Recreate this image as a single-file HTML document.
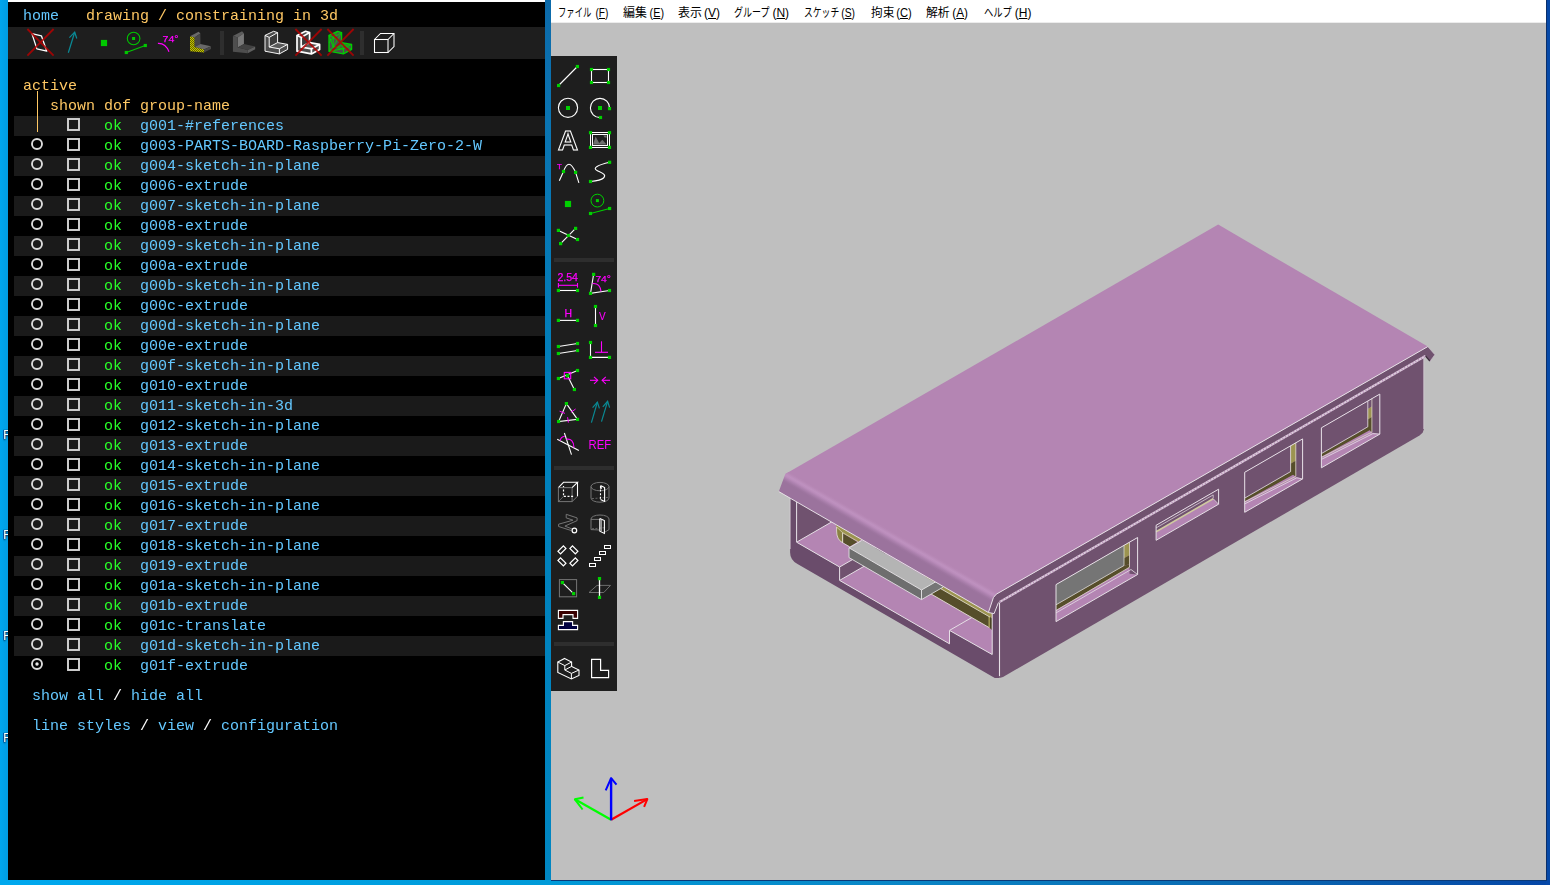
<!DOCTYPE html>
<html lang="ja">
<head>
<meta charset="utf-8">
<title>SolveSpace</title>
<style>
html,body{margin:0;padding:0;}
body{width:1550px;height:885px;overflow:hidden;background:#0563b8;}
#desk{position:absolute;left:0;top:0;width:1550px;height:885px;overflow:hidden;background:#00a3ea;}
#s_mid{position:absolute;left:545px;top:0;width:6px;height:885px;background:linear-gradient(180deg,#0c6aaa 0px,#0a74b2 120px,#0080bc 400px,#0086c2 885px);}
#s_bot{position:absolute;left:0;top:880px;width:1550px;height:5px;background:linear-gradient(90deg,#00a8ee 0px,#009ad8 550px,#0a86c6 900px,#0a68b0 1250px,#0546a6 1550px);}
#s_right{position:absolute;left:1546px;top:0;width:4px;height:885px;background:#0649a8;}
#s_left{position:absolute;left:0;top:0;width:8px;height:885px;background:linear-gradient(90deg,#00a6ee,#009ce2);}
.dk{position:absolute;left:3px;width:6px;height:14px;overflow:hidden;color:#fff;font:12px "Liberation Sans",sans-serif;line-height:14px;text-shadow:-1px 0 1px #013,0 1px 2px #013;}
#tw{position:absolute;left:8px;top:2px;width:537px;height:878px;background:#000;overflow:hidden;
  font-family:"Liberation Mono","DejaVu Sans Mono",monospace;font-size:15px;line-height:20px;color:#fff;transform:translateZ(0);will-change:transform;}
#twtop{position:absolute;left:8px;top:0;width:537px;height:2px;background:#fff;}
#tw .band{position:absolute;left:0;top:25px;width:537px;height:32px;background:#1e1e1e;}
#tw .row{position:absolute;left:6px;width:531px;height:20px;}
#tw .row.sh{background:#1a1a1a;}
#tw .t{position:absolute;white-space:pre;height:20px;line-height:20px;}
.cl{color:#64c8ff}.ct{color:#ffc864}.cs{color:#28ff28}.cd{color:#fff}
#tw .vline{position:absolute;left:29px;top:89px;width:1px;height:41px;background:#ffc864;}
#tw svg.ic{position:absolute;overflow:visible;}
#gw{position:absolute;left:551px;top:0;width:995px;height:880px;background:#bfbfbf;overflow:hidden;}
#gwr{position:absolute;left:1546px;top:0;width:1px;height:881px;background:#0a2f6a;}
#gwb{position:absolute;left:551px;top:880px;width:996px;height:1px;background:#0a3a78;}
#menu{position:absolute;left:0;top:0;width:995px;height:22px;background:#fff;border-bottom:1px solid #ececec;
  font-family:"Liberation Sans","Noto Sans CJK JP",sans-serif;font-size:12px;color:#000;}
#menu span.mi{position:absolute;top:0;height:22px;line-height:26px;white-space:nowrap;transform-origin:0 50%;}
#menu u{text-decoration:underline;text-underline-offset:1px;}
#canvas{position:absolute;left:0;top:23px;width:995px;height:857px;background:#bfbfbf;overflow:hidden;}
#canvas svg{position:absolute;left:0;top:0;}
#tb{position:absolute;left:0;top:56px;width:66px;height:635px;background:#1e1e1e;transform:translateZ(0);will-change:transform;}
#tb .sep{position:absolute;left:3px;width:60px;height:4px;background:#2e2e2e;}
#tb svg{position:absolute;left:0;top:0;overflow:visible;}

</style>
</head>
<body>
<div id="desk">
<div id="s_left"></div><div id="s_mid"></div><div id="s_bot"></div><div id="s_right"></div>
<div id="twtop"></div>
<div class="dk" style="top:428px">F</div>
<div class="dk" style="top:528px">F</div>
<div class="dk" style="top:629px">F</div>
<div class="dk" style="top:731px">F</div>
<div id="tw">
<div class="band"></div>
<span class="t cl" style="left:15px;top:5px">home</span>
<span class="t ct" style="left:78px;top:5px">drawing / constraining in 3d</span>
<!--ICONS--><svg class="ic" style="left:0;top:0" width="537" height="60" viewBox="8 2 537 60">
<defs><pattern id="dith" width="2" height="2" patternUnits="userSpaceOnUse"><rect width="2" height="2" fill="#646400"/><rect width="1" height="1" fill="#c4c400"/><rect x="1" y="1" width="1" height="1" fill="#c4c400"/></pattern></defs>
<rect x="220" y="31" width="4" height="24" fill="#2e2e2e"/><rect x="360" y="31" width="4" height="24" fill="#2e2e2e"/>
<g transform="translate(28,31)"><polygon points="3.9,2.6 13.4,4.8 18.8,20.2 8.9,17.9" fill="none" stroke="#ffffff" stroke-width="1.3" stroke-linejoin="round"/><g opacity="0.85"><polyline points="-0.6,-2.0 25.6,24.7" fill="none" stroke="#b40000" stroke-width="1.8" /><polyline points="25.6,-2.0 -0.6,24.7" fill="none" stroke="#b40000" stroke-width="1.8" /></g></g>
<g transform="translate(60,31)"><polyline points="8.3,21.7 14.7,1.2" fill="none" stroke="#0a8a96" stroke-width="1.2" /><polyline points="9.4,6.6 14.7,1.2 16.8,7.5" fill="none" stroke="#0a8a96" stroke-width="1.2" /></g>
<g transform="translate(92,31)"><rect x="8.90" y="8.90" width="6.2" height="6.2" fill="#00c800"/></g>
<g transform="translate(124,31)"><circle cx="9.6" cy="7.5" r="6.3" fill="none" stroke="#00c800" stroke-width="1.1"/><rect x="8.10" y="6.00" width="3" height="3" fill="#00c800"/><polyline points="2.3,21.5 21.3,14.5" fill="none" stroke="#00c800" stroke-width="1.2" /><rect x="0.70" y="19.90" width="3.2" height="3.2" fill="#00c800"/><rect x="19.70" y="12.90" width="3.2" height="3.2" fill="#00c800"/></g>
<g transform="translate(156,31)"><text x="6.6" y="10.7" font-family="Liberation Sans,sans-serif"  font-size="9.6" fill="#ff00ff" stroke="#ff00ff" stroke-width="0.25" textLength="16" lengthAdjust="spacingAndGlyphs">74°</text><path d="M1.9,12.4 Q9.6,12 13,20.8" fill="none" stroke="#ff00ff" stroke-width="1.2"/></g>
<g transform="translate(188,31)"><polygon points="2.0,5.3 10.6,0.7 12.4,2.6 6.5,6.6" fill="#6a6a6a"/><polygon points="6.5,6.6 12.4,2.6 12.4,12.9 6.5,16.1" fill="#464646"/><polygon points="6.5,16.1 12.4,12.9 23.0,15.2 16.0,18.4" fill="#686868"/><polygon points="16.0,18.4 23.0,15.2 23.0,17.9 16.0,21.5" fill="#464646"/><polygon points="2.0,5.3 6.5,6.6 6.5,16.1 16.0,18.4 16.0,21.5 2.0,20.2" fill="url(#dith)"/></g>
<g transform="translate(232,31)"><g transform="translate(-1.2,-0.6) scale(1.06,1.06)"><polygon points="2.0,5.3 10.6,0.7 12.4,2.6 6.5,6.6" fill="#5c5c5c"/><polygon points="6.5,6.6 12.4,2.6 12.4,12.9 6.5,16.1" fill="#787878"/><polygon points="6.5,16.1 12.4,12.9 23.0,15.2 16.0,18.4" fill="#424242"/><polygon points="16.0,18.4 23.0,15.2 23.0,17.9 16.0,21.5" fill="#5e5e5e"/><polygon points="2.0,5.3 6.5,6.6 6.5,16.1 16.0,18.4 16.0,21.5 2.0,20.2" fill="#4e4e4e"/></g></g>
<g transform="translate(264,31)"><polygon points="1.0,4.4 9.6,0.3 13.6,1.6 13.6,11.6 23.6,13.4 23.6,18.4 15.4,22.9 1.0,20.2" fill="#4c4c4c"/><polygon points="5.2,6.4 13.6,1.6 13.6,11.6 5.2,16.0" fill="#3c3c3c"/><polygon points="5.2,16.0 13.6,11.6 23.6,13.4 15.4,17.8" fill="#5a5a5a"/><polygon points="1.0,4.4 9.6,0.3 13.6,1.6 13.6,11.6 23.6,13.4 23.6,18.4 15.4,22.9 1.0,20.2" fill="none" stroke="#ffffff" stroke-width="0.95" stroke-linejoin="round"/><polyline points="1.0,4.4 5.2,6.4 13.6,1.6" fill="none" stroke="#ffffff" stroke-width="0.95" /><polyline points="5.2,6.4 5.2,16.0 15.4,17.8 23.6,13.4" fill="none" stroke="#ffffff" stroke-width="0.95" /><polyline points="15.4,17.8 15.4,22.9" fill="none" stroke="#ffffff" stroke-width="0.95" /><polyline points="5.2,16.0 13.6,11.6" fill="none" stroke="#ffffff" stroke-width="0.95" /></g>
<g transform="translate(296,31)"><polygon points="1.0,4.4 9.6,0.3 13.6,1.6 13.6,11.6 23.6,13.4 23.6,18.4 15.4,22.9 1.0,20.2" fill="#4c4c4c"/><polygon points="5.2,6.4 13.6,1.6 13.6,11.6 5.2,16.0" fill="#3c3c3c"/><polygon points="5.2,16.0 13.6,11.6 23.6,13.4 15.4,17.8" fill="#5a5a5a"/><polygon points="1.0,4.4 9.6,0.3 13.6,1.6 13.6,11.6 23.6,13.4 23.6,18.4 15.4,22.9 1.0,20.2" fill="none" stroke="#ffffff" stroke-width="1.7" stroke-linejoin="round"/><polyline points="1.0,4.4 5.2,6.4 13.6,1.6" fill="none" stroke="#ffffff" stroke-width="1.7" /><polyline points="5.2,6.4 5.2,16.0 15.4,17.8 23.6,13.4" fill="none" stroke="#ffffff" stroke-width="1.7" /><polyline points="15.4,17.8 15.4,22.9" fill="none" stroke="#ffffff" stroke-width="1.7" /><polyline points="5.2,16.0 13.6,11.6" fill="none" stroke="#ffffff" stroke-width="1.7" /><g opacity="0.85"><polyline points="-0.6,-2.0 25.6,24.7" fill="none" stroke="#b40000" stroke-width="1.8" /><polyline points="25.6,-2.0 -0.6,24.7" fill="none" stroke="#b40000" stroke-width="1.8" /></g></g>
<g transform="translate(328,31)"><polygon points="1.0,4.4 9.6,0.3 13.6,1.6 13.6,11.6 23.6,13.4 23.6,18.4 15.4,22.9 1.0,20.2" fill="#4c4c4c"/><polygon points="1.0,4.4 9.6,0.3 13.6,1.6 13.6,11.6 23.6,13.4 23.6,18.4 15.4,22.9 1.0,20.2" fill="none" stroke="#00d000" stroke-width="1.3" stroke-linejoin="round"/><polyline points="1.0,4.4 5.2,6.4 13.6,1.6" fill="none" stroke="#00d000" stroke-width="1" /><polyline points="5.2,6.4 5.2,16.0 15.4,17.8 23.6,13.4" fill="none" stroke="#00d000" stroke-width="1" /><polyline points="15.4,17.8 15.4,22.9" fill="none" stroke="#00d000" stroke-width="1" /><polyline points="1.0,4.4 5.2,16.0 1.0,20.2 15.4,17.8 15.4,22.9" fill="none" stroke="#00d000" stroke-width="1" /><polyline points="5.2,6.4 13.6,11.6 15.4,17.8" fill="none" stroke="#00d000" stroke-width="1" /><polyline points="9.6,0.3 5.2,6.4" fill="none" stroke="#00d000" stroke-width="1" /><polyline points="13.6,1.6 5.2,16.0" fill="none" stroke="#00d000" stroke-width="0.9" /><polyline points="13.6,11.6 23.6,18.4" fill="none" stroke="#00d000" stroke-width="0.9" /><polyline points="5.2,16.0 23.6,13.4" fill="none" stroke="#00d000" stroke-width="0.9" /><polyline points="1.0,12.0 5.2,6.4" fill="none" stroke="#00d000" stroke-width="0.9" /><g opacity="0.85"><polyline points="-0.6,-2.0 25.6,24.7" fill="none" stroke="#b40000" stroke-width="1.8" /><polyline points="25.6,-2.0 -0.6,24.7" fill="none" stroke="#b40000" stroke-width="1.8" /></g></g>
<g transform="translate(372,31)"><rect x="2.5" y="8.5" width="13.5" height="13" fill="none" stroke="#fff" stroke-width="1.05"/><polyline points="2.5,8.5 8.5,2.5 22.0,2.5 22.0,15.5 16.0,21.5" fill="none" stroke="#ffffff" stroke-width="1.05" /><polyline points="16.0,8.5 22.0,2.5" fill="none" stroke="#ffffff" stroke-width="1.05" /></g>
</svg><!--/ICONS-->
<span class="t ct" style="left:15px;top:75px">active</span>
<span class="t ct" style="left:42px;top:95px">shown dof group-name</span>
<div class="row sh" style="top:114px"></div>
<div class="row" style="top:134px"></div>
<div class="row sh" style="top:154px"></div>
<div class="row" style="top:174px"></div>
<div class="row sh" style="top:194px"></div>
<div class="row" style="top:214px"></div>
<div class="row sh" style="top:234px"></div>
<div class="row" style="top:254px"></div>
<div class="row sh" style="top:274px"></div>
<div class="row" style="top:294px"></div>
<div class="row sh" style="top:314px"></div>
<div class="row" style="top:334px"></div>
<div class="row sh" style="top:354px"></div>
<div class="row" style="top:374px"></div>
<div class="row sh" style="top:394px"></div>
<div class="row" style="top:414px"></div>
<div class="row sh" style="top:434px"></div>
<div class="row" style="top:454px"></div>
<div class="row sh" style="top:474px"></div>
<div class="row" style="top:494px"></div>
<div class="row sh" style="top:514px"></div>
<div class="row" style="top:534px"></div>
<div class="row sh" style="top:554px"></div>
<div class="row" style="top:574px"></div>
<div class="row sh" style="top:594px"></div>
<div class="row" style="top:614px"></div>
<div class="row sh" style="top:634px"></div>
<div class="row" style="top:654px"></div>
<span class="t cs" style="left:96px;top:115px">ok</span>
<span class="t cl" style="left:132px;top:115px">g001-#references</span>
<span class="t cs" style="left:96px;top:135px">ok</span>
<span class="t cl" style="left:132px;top:135px">g003-PARTS-BOARD-Raspberry-Pi-Zero-2-W</span>
<span class="t cs" style="left:96px;top:155px">ok</span>
<span class="t cl" style="left:132px;top:155px">g004-sketch-in-plane</span>
<span class="t cs" style="left:96px;top:175px">ok</span>
<span class="t cl" style="left:132px;top:175px">g006-extrude</span>
<span class="t cs" style="left:96px;top:195px">ok</span>
<span class="t cl" style="left:132px;top:195px">g007-sketch-in-plane</span>
<span class="t cs" style="left:96px;top:215px">ok</span>
<span class="t cl" style="left:132px;top:215px">g008-extrude</span>
<span class="t cs" style="left:96px;top:235px">ok</span>
<span class="t cl" style="left:132px;top:235px">g009-sketch-in-plane</span>
<span class="t cs" style="left:96px;top:255px">ok</span>
<span class="t cl" style="left:132px;top:255px">g00a-extrude</span>
<span class="t cs" style="left:96px;top:275px">ok</span>
<span class="t cl" style="left:132px;top:275px">g00b-sketch-in-plane</span>
<span class="t cs" style="left:96px;top:295px">ok</span>
<span class="t cl" style="left:132px;top:295px">g00c-extrude</span>
<span class="t cs" style="left:96px;top:315px">ok</span>
<span class="t cl" style="left:132px;top:315px">g00d-sketch-in-plane</span>
<span class="t cs" style="left:96px;top:335px">ok</span>
<span class="t cl" style="left:132px;top:335px">g00e-extrude</span>
<span class="t cs" style="left:96px;top:355px">ok</span>
<span class="t cl" style="left:132px;top:355px">g00f-sketch-in-plane</span>
<span class="t cs" style="left:96px;top:375px">ok</span>
<span class="t cl" style="left:132px;top:375px">g010-extrude</span>
<span class="t cs" style="left:96px;top:395px">ok</span>
<span class="t cl" style="left:132px;top:395px">g011-sketch-in-3d</span>
<span class="t cs" style="left:96px;top:415px">ok</span>
<span class="t cl" style="left:132px;top:415px">g012-sketch-in-plane</span>
<span class="t cs" style="left:96px;top:435px">ok</span>
<span class="t cl" style="left:132px;top:435px">g013-extrude</span>
<span class="t cs" style="left:96px;top:455px">ok</span>
<span class="t cl" style="left:132px;top:455px">g014-sketch-in-plane</span>
<span class="t cs" style="left:96px;top:475px">ok</span>
<span class="t cl" style="left:132px;top:475px">g015-extrude</span>
<span class="t cs" style="left:96px;top:495px">ok</span>
<span class="t cl" style="left:132px;top:495px">g016-sketch-in-plane</span>
<span class="t cs" style="left:96px;top:515px">ok</span>
<span class="t cl" style="left:132px;top:515px">g017-extrude</span>
<span class="t cs" style="left:96px;top:535px">ok</span>
<span class="t cl" style="left:132px;top:535px">g018-sketch-in-plane</span>
<span class="t cs" style="left:96px;top:555px">ok</span>
<span class="t cl" style="left:132px;top:555px">g019-extrude</span>
<span class="t cs" style="left:96px;top:575px">ok</span>
<span class="t cl" style="left:132px;top:575px">g01a-sketch-in-plane</span>
<span class="t cs" style="left:96px;top:595px">ok</span>
<span class="t cl" style="left:132px;top:595px">g01b-extrude</span>
<span class="t cs" style="left:96px;top:615px">ok</span>
<span class="t cl" style="left:132px;top:615px">g01c-translate</span>
<span class="t cs" style="left:96px;top:635px">ok</span>
<span class="t cl" style="left:132px;top:635px">g01d-sketch-in-plane</span>
<span class="t cs" style="left:96px;top:655px">ok</span>
<span class="t cl" style="left:132px;top:655px">g01f-extrude</span>
<div class="vline"></div>
<svg class="ic" style="left:0;top:0" width="537" height="878" viewBox="8 2 537 878" fill="none">
<rect x="68" y="119" width="11" height="11" stroke="#d4d4d4" stroke-width="1.9"/>
<rect x="68" y="139" width="11" height="11" stroke="#d4d4d4" stroke-width="1.9"/>
<circle cx="37" cy="144" r="5" stroke="#dcdcdc" stroke-width="1.9"/>
<rect x="68" y="159" width="11" height="11" stroke="#d4d4d4" stroke-width="1.9"/>
<circle cx="37" cy="164" r="5" stroke="#dcdcdc" stroke-width="1.9"/>
<rect x="68" y="179" width="11" height="11" stroke="#d4d4d4" stroke-width="1.9"/>
<circle cx="37" cy="184" r="5" stroke="#dcdcdc" stroke-width="1.9"/>
<rect x="68" y="199" width="11" height="11" stroke="#d4d4d4" stroke-width="1.9"/>
<circle cx="37" cy="204" r="5" stroke="#dcdcdc" stroke-width="1.9"/>
<rect x="68" y="219" width="11" height="11" stroke="#d4d4d4" stroke-width="1.9"/>
<circle cx="37" cy="224" r="5" stroke="#dcdcdc" stroke-width="1.9"/>
<rect x="68" y="239" width="11" height="11" stroke="#d4d4d4" stroke-width="1.9"/>
<circle cx="37" cy="244" r="5" stroke="#dcdcdc" stroke-width="1.9"/>
<rect x="68" y="259" width="11" height="11" stroke="#d4d4d4" stroke-width="1.9"/>
<circle cx="37" cy="264" r="5" stroke="#dcdcdc" stroke-width="1.9"/>
<rect x="68" y="279" width="11" height="11" stroke="#d4d4d4" stroke-width="1.9"/>
<circle cx="37" cy="284" r="5" stroke="#dcdcdc" stroke-width="1.9"/>
<rect x="68" y="299" width="11" height="11" stroke="#d4d4d4" stroke-width="1.9"/>
<circle cx="37" cy="304" r="5" stroke="#dcdcdc" stroke-width="1.9"/>
<rect x="68" y="319" width="11" height="11" stroke="#d4d4d4" stroke-width="1.9"/>
<circle cx="37" cy="324" r="5" stroke="#dcdcdc" stroke-width="1.9"/>
<rect x="68" y="339" width="11" height="11" stroke="#d4d4d4" stroke-width="1.9"/>
<circle cx="37" cy="344" r="5" stroke="#dcdcdc" stroke-width="1.9"/>
<rect x="68" y="359" width="11" height="11" stroke="#d4d4d4" stroke-width="1.9"/>
<circle cx="37" cy="364" r="5" stroke="#dcdcdc" stroke-width="1.9"/>
<rect x="68" y="379" width="11" height="11" stroke="#d4d4d4" stroke-width="1.9"/>
<circle cx="37" cy="384" r="5" stroke="#dcdcdc" stroke-width="1.9"/>
<rect x="68" y="399" width="11" height="11" stroke="#d4d4d4" stroke-width="1.9"/>
<circle cx="37" cy="404" r="5" stroke="#dcdcdc" stroke-width="1.9"/>
<rect x="68" y="419" width="11" height="11" stroke="#d4d4d4" stroke-width="1.9"/>
<circle cx="37" cy="424" r="5" stroke="#dcdcdc" stroke-width="1.9"/>
<rect x="68" y="439" width="11" height="11" stroke="#d4d4d4" stroke-width="1.9"/>
<circle cx="37" cy="444" r="5" stroke="#dcdcdc" stroke-width="1.9"/>
<rect x="68" y="459" width="11" height="11" stroke="#d4d4d4" stroke-width="1.9"/>
<circle cx="37" cy="464" r="5" stroke="#dcdcdc" stroke-width="1.9"/>
<rect x="68" y="479" width="11" height="11" stroke="#d4d4d4" stroke-width="1.9"/>
<circle cx="37" cy="484" r="5" stroke="#dcdcdc" stroke-width="1.9"/>
<rect x="68" y="499" width="11" height="11" stroke="#d4d4d4" stroke-width="1.9"/>
<circle cx="37" cy="504" r="5" stroke="#dcdcdc" stroke-width="1.9"/>
<rect x="68" y="519" width="11" height="11" stroke="#d4d4d4" stroke-width="1.9"/>
<circle cx="37" cy="524" r="5" stroke="#dcdcdc" stroke-width="1.9"/>
<rect x="68" y="539" width="11" height="11" stroke="#d4d4d4" stroke-width="1.9"/>
<circle cx="37" cy="544" r="5" stroke="#dcdcdc" stroke-width="1.9"/>
<rect x="68" y="559" width="11" height="11" stroke="#d4d4d4" stroke-width="1.9"/>
<circle cx="37" cy="564" r="5" stroke="#dcdcdc" stroke-width="1.9"/>
<rect x="68" y="579" width="11" height="11" stroke="#d4d4d4" stroke-width="1.9"/>
<circle cx="37" cy="584" r="5" stroke="#dcdcdc" stroke-width="1.9"/>
<rect x="68" y="599" width="11" height="11" stroke="#d4d4d4" stroke-width="1.9"/>
<circle cx="37" cy="604" r="5" stroke="#dcdcdc" stroke-width="1.9"/>
<rect x="68" y="619" width="11" height="11" stroke="#d4d4d4" stroke-width="1.9"/>
<circle cx="37" cy="624" r="5" stroke="#dcdcdc" stroke-width="1.9"/>
<rect x="68" y="639" width="11" height="11" stroke="#d4d4d4" stroke-width="1.9"/>
<circle cx="37" cy="644" r="5" stroke="#dcdcdc" stroke-width="1.9"/>
<rect x="68" y="659" width="11" height="11" stroke="#d4d4d4" stroke-width="1.9"/>
<circle cx="37" cy="664" r="5" stroke="#dcdcdc" stroke-width="1.9"/>
<circle cx="37" cy="664" r="1.7" fill="#e8e8e8"/>
</svg>
<span class="t cl" style="left:24px;top:685px">show all</span>
<span class="t cd" style="left:105px;top:685px">/</span>
<span class="t cl" style="left:123px;top:685px">hide all</span>
<span class="t cl" style="left:24px;top:715px">line styles</span>
<span class="t cd" style="left:132px;top:715px">/</span>
<span class="t cl" style="left:150px;top:715px">view</span>
<span class="t cd" style="left:195px;top:715px">/</span>
<span class="t cl" style="left:213px;top:715px">configuration</span>
</div>
<div id="gw">
<div id="menu">
<span class="mi" style="left:7.0px;transform:scaleX(0.694)">ファイル</span><span class="mi" style="right:937.6px;transform-origin:100% 50%;transform:scaleX(0.84)">(<u>F</u>)</span>
<span class="mi" style="left:72.4px;transform:scaleX(0.996)">編集</span><span class="mi" style="right:882.2px;transform-origin:100% 50%;transform:scaleX(0.9)">(<u>E</u>)</span>
<span class="mi" style="left:127.2px;transform:scaleX(0.996)">表示</span><span class="mi" style="right:825.9px;transform-origin:100% 50%;transform:scaleX(1)">(<u>V</u>)</span>
<span class="mi" style="left:182.9px;transform:scaleX(0.750)">グループ</span><span class="mi" style="right:756.9px;transform-origin:100% 50%;transform:scaleX(1)">(<u>N</u>)</span>
<span class="mi" style="left:253.0px;transform:scaleX(0.733)">スケッチ</span><span class="mi" style="right:690.8px;transform-origin:100% 50%;transform:scaleX(0.86)">(<u>S</u>)</span>
<span class="mi" style="left:319.6px;transform:scaleX(0.975)">拘束</span><span class="mi" style="right:634.3px;transform-origin:100% 50%;transform:scaleX(0.93)">(<u>C</u>)</span>
<span class="mi" style="left:375.0px;transform:scaleX(0.988)">解析</span><span class="mi" style="right:577.9px;transform-origin:100% 50%;transform:scaleX(0.98)">(<u>A</u>)</span>
<span class="mi" style="left:432.9px;transform:scaleX(0.775)">ヘルプ</span><span class="mi" style="right:514.6px;transform-origin:100% 50%;transform:scaleX(1)">(<u>H</u>)</span>
</div>
<div id="canvas">
<svg width="995" height="857" viewBox="551 23 995 857">
<defs>
<linearGradient id="lipg" gradientUnits="userSpaceOnUse" x1="787.30" y1="470.64" x2="775.80" y2="490.55">
<stop offset="0.000" stop-color="#b485b3"/>
<stop offset="0.061" stop-color="#b687b5"/>
<stop offset="0.130" stop-color="#bb8dbb"/>
<stop offset="0.187" stop-color="#be91bf"/>
<stop offset="0.252" stop-color="#ba8cbb"/>
<stop offset="0.339" stop-color="#ac81ae"/>
<stop offset="0.435" stop-color="#9f76a1"/>
<stop offset="0.500" stop-color="#9b739d"/>
<stop offset="1.000" stop-color="#9b739d"/>
</linearGradient>
<clipPath id="opclip"><polygon points="796.6,470.0 796.6,542.2 839.6,567.0 839.6,580.4 949.5,643.8 949.5,630.4 992.2,654.5 992.2,590.0 900.0,520.0"/></clipPath>
</defs>
<polygon points="999.5,601.8 1423.8,356.8 1423.8,429.5 1422.6,432.8 1419.5,435.6 1003.0,677.0 999.5,678.0" fill="#70526f" />
<g>
<polygon points="1056.0,584.6 1137.6,537.5 1137.6,574.5 1056.0,621.6" fill="#b485b3" />
<polygon points="1129.5,542.2 1137.6,537.5 1137.6,574.5 1129.5,573.7" fill="#70526f" />
<polygon points="1056.0,584.6 1124.0,545.3 1124.0,565.8 1056.0,605.1" fill="#757575" />
<polygon points="1124.0,545.3 1129.5,542.2 1129.5,555.2 1124.0,558.3" fill="#9c9450" />
<polygon points="1124.0,558.3 1129.5,555.2 1129.5,564.2 1124.0,565.8" fill="#564e2a" />
<polygon points="1056.0,605.1 1124.0,565.8 1129.5,564.2 1129.5,567.2 1056.0,610.1" fill="#564e2a" />
<polyline points="1056.0,604.8 1124.0,565.5 1124.0,545.3" fill="none" stroke="#d8d8d0" stroke-width="0.8" stroke-linejoin="round" />
<polyline points="1129.5,542.2 1129.5,567.2 1056.0,610.6" fill="none" stroke="#dcd6c8" stroke-width="0.8" stroke-linejoin="round" />
<polyline points="1056.0,612.9 1131.0,569.5 1137.6,574.5" fill="none" stroke="#e6dfe6" stroke-width="0.8" stroke-linejoin="round" />
<polygon points="1056.0,584.6 1137.6,537.5 1137.6,574.5 1056.0,621.6" fill="none" stroke="#e6dfe6" stroke-width="1"/>
</g>
<g>
<polygon points="1156.1,525.3 1218.6,489.2 1218.6,504.2 1156.1,540.3" fill="#b485b3" />
<polygon points="1156.1,525.3 1218.6,489.2 1218.6,504.2 1213.2,498.8 1156.1,531.5" fill="#70526f" />
<polyline points="1156.1,527.9 1213.2,494.9 1213.2,498.3" fill="none" stroke="#e6dfe6" stroke-width="0.7" stroke-linejoin="round" />
<polyline points="1156.1,531.7 1213.2,498.7" fill="none" stroke="#cfc9a0" stroke-width="1.6" stroke-linejoin="round" />
<polyline points="1213.2,498.7 1218.6,504.2" fill="none" stroke="#e6dfe6" stroke-width="0.7" stroke-linejoin="round" />
<polygon points="1156.1,525.3 1218.6,489.2 1218.6,504.2 1156.1,540.3" fill="none" stroke="#e6dfe6" stroke-width="1"/>
</g>
<g>
<polygon points="1244.7,472.3 1302.6,438.9 1302.6,478.9 1244.7,512.3" fill="#b485b3" />
<polygon points="1295.8,442.8 1302.6,438.9 1302.6,478.9 1295.8,476.8" fill="#70526f" />
<polygon points="1244.7,472.3 1290.6,445.8 1290.6,472.3 1244.7,498.8" fill="#70526f" />
<polygon points="1290.6,445.8 1295.8,442.8 1295.8,442.8 1290.6,445.8" fill="#70526f" />
<polygon points="1290.6,445.8 1295.8,442.8 1295.8,460.8 1290.6,463.8" fill="#9c9450" />
<polygon points="1290.6,463.8 1295.8,460.8 1295.8,476.8 1290.6,472.8" fill="#564e2a" />
<polygon points="1244.7,498.3 1290.6,471.8 1295.8,475.8 1295.8,473.3 1244.7,501.3" fill="#564e2a" />
<polyline points="1244.7,498.1 1290.6,471.6 1290.6,445.8" fill="none" stroke="#e6dfe6" stroke-width="0.8" stroke-linejoin="round" />
<polyline points="1295.8,442.8 1295.8,476.3 1244.7,501.9" fill="none" stroke="#dcd6c8" stroke-width="0.8" stroke-linejoin="round" />
<polyline points="1244.7,503.9 1296.8,477.8 1302.6,478.9" fill="none" stroke="#e6dfe6" stroke-width="0.8" stroke-linejoin="round" />
<polygon points="1244.7,472.3 1302.6,438.9 1302.6,478.9 1244.7,512.3" fill="none" stroke="#e6dfe6" stroke-width="1"/>
</g>
<g>
<polygon points="1321.4,427.8 1379.8,394.1 1379.8,434.1 1321.4,467.8" fill="#b485b3" />
<polygon points="1371.9,398.6 1379.8,394.1 1379.8,434.1 1371.9,432.6" fill="#70526f" />
<polygon points="1321.4,427.8 1367.8,401.0 1367.8,427.5 1321.4,454.3" fill="#70526f" />
<polygon points="1367.8,401.0 1371.9,398.6 1371.9,406.6 1367.8,409.0" fill="#70526f" />
<polygon points="1367.8,409.0 1371.9,406.6 1371.9,417.1 1367.8,419.5" fill="#9c9450" />
<polygon points="1367.8,419.5 1371.9,417.1 1371.9,432.6 1367.8,428.0" fill="#564e2a" />
<polygon points="1321.4,453.8 1367.8,427.0 1371.9,431.6 1371.9,429.1 1321.4,456.8" fill="#564e2a" />
<polyline points="1321.4,453.6 1367.8,426.8 1367.8,401.0" fill="none" stroke="#e6dfe6" stroke-width="0.8" stroke-linejoin="round" />
<polyline points="1371.9,398.6 1371.9,432.1 1321.4,457.4" fill="none" stroke="#dcd6c8" stroke-width="0.8" stroke-linejoin="round" />
<polyline points="1321.4,459.4 1372.9,433.6 1379.8,434.1" fill="none" stroke="#e6dfe6" stroke-width="0.8" stroke-linejoin="round" />
<polygon points="1321.4,427.8 1379.8,394.1 1379.8,434.1 1321.4,467.8" fill="none" stroke="#e6dfe6" stroke-width="1"/>
</g>
<polyline points="1423.8,357.5 1423.8,429.0" fill="none" stroke="#d8cfd8" stroke-width="0.8" stroke-linejoin="round" />
<g clip-path="url(#opclip)">
<polygon points="790.0,460.0 1000.0,560.0 1000.0,680.0 790.0,580.0" fill="#b485b3" />
<polygon points="796.6,470.0 796.6,542.2 880.0,494.0 880.0,470.0" fill="#70526f" />
<polyline points="796.6,542.2 880.0,494.0" fill="none" stroke="#e6dfe6" stroke-width="1" stroke-linejoin="round" />
<polygon points="839.6,567.0 839.6,580.4 899.6,545.8 899.6,532.4" fill="#70526f" />
<polyline points="839.6,567.0 899.6,532.4" fill="none" stroke="#e6dfe6" stroke-width="1" stroke-linejoin="round" />
<polyline points="839.6,580.4 899.6,545.8" fill="none" stroke="#e6dfe6" stroke-width="1" stroke-linejoin="round" />
<polyline points="949.5,630.4 989.5,607.3" fill="none" stroke="#e6dfe6" stroke-width="1" stroke-linejoin="round" />
<polygon points="925.0,575.0 993.0,614.3 993.0,618.9 925.0,579.6" fill="#9c9450" />
<polygon points="925.0,579.6 989.0,616.6 989.0,627.5 925.0,590.5" fill="#564e2a" />
<polygon points="988.4,616.2 990.0,617.1 990.0,628.3 988.4,626.8" fill="#9c9450" />
<polygon points="990.0,617.1 992.2,618.4 992.2,630.3 990.0,628.3" fill="#4a4424" />
<polyline points="925.0,579.6 990.0,617.1" fill="none" stroke="#e0dcc4" stroke-width="0.9" stroke-linejoin="round" />
<polyline points="925.0,590.5 989.0,627.5" fill="none" stroke="#e4dfd4" stroke-width="0.9" stroke-linejoin="round" />
<path d="M836,523.6 L862,538.6 L858.5,541.8 L843,533.2 L842.4,542.4 Q836.6,539.5 836.6,531 Z" fill="#9c9450"/>
<path d="M836.6,527.5 L836.6,531 Q836.6,539.5 842.4,542.4 L842.4,533 Z" fill="#8a8244"/>
<polygon points="843.1,533.4 857.4,542.0 849.9,546.6 843.1,543.0" fill="#564e2a" />
<polyline points="842.6,532.6 842.6,543.0" fill="none" stroke="#e8e4d0" stroke-width="0.9" stroke-linejoin="round" />
<polyline points="836.6,527.0 842.6,532.6 858.0,541.6" fill="none" stroke="#d8d2b0" stroke-width="0.7" stroke-linejoin="round" />
<path d="M836.6,527 L836.6,531 Q836.6,539.5 842.4,542.6 L849.5,546.8" fill="none" stroke="#e8e0e4" stroke-width="0.8"/>
<polygon points="849.0,547.8 862.0,540.3 943.0,587.0 921.5,590.0" fill="#b4b4b4" />
<polygon points="849.0,547.8 921.5,590.0 921.5,599.6 849.0,557.6" fill="#6e6e6e" />
<polygon points="921.5,590.0 943.0,577.6 943.0,587.2 921.5,599.6" fill="#767676" />
<polyline points="861.6,540.5 849.0,547.8 921.5,590.0 943.0,577.6" fill="none" stroke="#e8e8e8" stroke-width="0.9" stroke-linejoin="round" />
<polyline points="849.0,547.8 849.0,557.6 921.5,599.6 943.0,587.2" fill="none" stroke="#e0e0e0" stroke-width="0.9" stroke-linejoin="round" />
<polyline points="921.5,590.0 921.5,599.6" fill="none" stroke="#e8e8e8" stroke-width="0.9" stroke-linejoin="round" />
</g>
<path d="M790.1,485 L1000,590 L999.5,678 L994.8,678 L797.5,564.1 Q790.1,559.9 790.1,552.5 Z M796.6,470 L796.6,542.2 L839.6,567 L839.6,580.4 L949.5,643.8 L949.5,630.4 L992.2,654.5 L992.2,590 L900,520 Z" fill="#6a4c6b" fill-rule="evenodd"/>
<polyline points="796.6,498.0 796.6,542.2 839.6,567.0 839.6,580.4 949.5,643.8 949.5,630.4 992.2,654.5 992.2,612.0" fill="none" stroke="#e6dfe6" stroke-width="1" stroke-linejoin="round" />
<polyline points="790.1,498.0 790.1,549.0" fill="none" stroke="#d8cfd8" stroke-width="0.8" stroke-linejoin="round" />
<polyline points="999.5,603.0 999.5,676.0" fill="none" stroke="#e6dfe6" stroke-width="1.1" stroke-linejoin="round" />
<polygon points="996.3,594.2 1427.8,346.6 1434.9,354.7 1430.0,361.4 1425.4,355.8 999.8,601.7 998.1,603.4 994.1,613.6 988.4,612.5 993.4,597.6" fill="#70526f" />
<polygon points="785.3,474.1 1218.2,224.6 1427.8,346.6 996.3,594.2" fill="#b485b3" />
<polygon points="788.8,472.1 999.8,592.2 996.3,594.2 993.4,597.6 988.4,612.5 778.8,491.6 785.3,474.1" fill="url(#lipg)" />
<polyline points="778.8,491.6 988.4,612.5 994.1,613.6 998.1,603.4 999.8,601.7" fill="none" stroke="#e6dfe6" stroke-width="1" stroke-linejoin="round" />
<polyline points="999.8,601.9 1425.4,356.0" fill="none" stroke="#dccbdc" stroke-width="2.2" stroke-linejoin="round" />
<polyline points="999.8,601.9 1425.4,356.0" fill="none" stroke="#b890b8" stroke-width="2.2" stroke-linejoin="round" stroke-dasharray="1 2.2"/>
<polyline points="988.4,612.5 993.4,597.6 996.3,594.2 1427.8,346.6" fill="none" stroke="#e6dfe6" stroke-width="1" stroke-linejoin="round" />
<polyline points="1425.4,355.8 1430.0,361.4 1434.9,354.7 1427.8,346.6" fill="none" stroke="#cfc4cf" stroke-width="0.7" stroke-linejoin="round" />
<polyline points="1425.6,356.0 1429.8,361.0" fill="none" stroke="#3a2a3a" stroke-width="1.2" stroke-linejoin="round" />
<polyline points="611.1,819.7 647.3,799.1" fill="none" stroke="#ff0000" stroke-width="2.2" stroke-linejoin="round" />
<polyline points="634.1,800.9 647.3,799.1 644.1,806.8" fill="none" stroke="#ff0000" stroke-width="2.0" stroke-linejoin="round" />
<polyline points="611.1,819.7 574.9,799.3" fill="none" stroke="#00ff00" stroke-width="2.2" stroke-linejoin="round" />
<polyline points="583.5,797.5 574.9,799.3 582.6,809.5" fill="none" stroke="#00ff00" stroke-width="2.0" stroke-linejoin="round" />
<polyline points="611.1,820.3 611.1,778.1" fill="none" stroke="#0000ff" stroke-width="2.4" stroke-linejoin="round" />
<polyline points="605.7,790.3 611.1,778.1 616.5,784.6" fill="none" stroke="#0000ff" stroke-width="2.0" stroke-linejoin="round" />
</svg>
</div>
<div id="tb">
<div class="sep" style="top:202px"></div>
<div class="sep" style="top:410px"></div>
<div class="sep" style="top:586px"></div>
<svg width="66" height="635" viewBox="551 56 66 635">
<g transform="translate(556,64)"><polyline points="2.6,21.5 21.4,2.5" fill="none" stroke="#ffffff" stroke-width="1.1" /><rect x="1.00" y="19.90" width="3.2" height="3.2" fill="#00d000"/><rect x="19.80" y="0.90" width="3.2" height="3.2" fill="#00d000"/></g>
<g transform="translate(588,64)"><rect x="3.5" y="5.5" width="17" height="13" fill="none" stroke="#fff" stroke-width="1.1"/><rect x="1.90" y="3.90" width="3.2" height="3.2" fill="#00d000"/><rect x="18.90" y="3.90" width="3.2" height="3.2" fill="#00d000"/><rect x="1.90" y="16.90" width="3.2" height="3.2" fill="#00d000"/><rect x="18.90" y="16.90" width="3.2" height="3.2" fill="#00d000"/></g>
<g transform="translate(556,96)"><circle cx="12" cy="11.8" r="9.6" fill="none" stroke="#fff" stroke-width="1.1"/><rect x="10.00" y="10.00" width="4" height="4" fill="#00d000"/></g>
<g transform="translate(588,96)"><path d="M21.6,12 A9.6,9.6 0 1 0 12,21.6" fill="none" stroke="#fff" stroke-width="1.1"/><rect x="10.00" y="10.00" width="4" height="4" fill="#00d000"/><rect x="19.90" y="11.00" width="3.2" height="3.2" fill="#00d000"/><rect x="10.90" y="19.90" width="3.2" height="3.2" fill="#00d000"/></g>
<g transform="translate(556,128)"><text x="12" y="21.8" text-anchor="middle" font-family="Liberation Sans,sans-serif" font-weight="bold" font-size="28.4" fill="#1e1e1e" stroke="#fff" stroke-width="1">A</text></g>
<g transform="translate(588,128)"><rect x="2.5" y="4.5" width="19" height="15" fill="none" stroke="#fff" stroke-width="1"/><rect x="4.5" y="6.5" width="15" height="11" fill="none" stroke="#fff" stroke-width="1"/><path d="M5,16.6 L7.6,8.4 L11.2,15 L14.3,11.8 L18.6,16.6 Z" fill="#6e6e6e"/><path d="M15.4,7.4 L18.6,7.4 L18.6,9.8 Q15.8,9.8 15.4,7.4 Z" fill="#6e6e6e"/><rect x="0.90" y="3.10" width="3.2" height="3.2" fill="#00d000"/><rect x="19.90" y="3.10" width="3.2" height="3.2" fill="#00d000"/><rect x="0.90" y="17.80" width="3.2" height="3.2" fill="#00d000"/><rect x="19.90" y="17.80" width="3.2" height="3.2" fill="#00d000"/></g>
<g transform="translate(556,160)"><path d="M3.3,20.8 L7.5,11.5 Q10,4.2 13,4.2 Q16,4.2 19.6,12.4 L22.9,22.8" fill="none" stroke="#fff" stroke-width="1.1"/><text x="1.0" y="8.8" font-family="Liberation Sans,sans-serif" font-size="7.9" fill="#ff00ff" stroke="#ff00ff" stroke-width="0.25" >T</text><rect x="5.90" y="9.90" width="3.2" height="3.2" fill="#00d000"/><rect x="18.00" y="10.80" width="3.2" height="3.2" fill="#00d000"/></g>
<g transform="translate(588,160)"><path d="M21.6,2.3 C10,5 4,8 9,10.5 C14,13 19,14.5 15.5,18 C13,20.5 8,21 2.5,21.5" fill="none" stroke="#fff" stroke-width="1.1"/><rect x="20.00" y="0.70" width="3.2" height="3.2" fill="#00d000"/><rect x="0.90" y="19.90" width="3.2" height="3.2" fill="#00d000"/></g>
<g transform="translate(556,192)"><rect x="8.90" y="8.90" width="6.2" height="6.2" fill="#00d000"/></g>
<g transform="translate(588,192)"><circle cx="9.4" cy="8.6" r="6.4" fill="none" stroke="#00d000" stroke-width="1"/><rect x="7.90" y="7.10" width="3" height="3" fill="#00d000"/><polyline points="2.5,21.5 21.6,16.5" fill="none" stroke="#00d000" stroke-width="1.1" /><rect x="0.90" y="19.90" width="3.2" height="3.2" fill="#00d000"/><rect x="20.00" y="14.90" width="3.2" height="3.2" fill="#00d000"/></g>
<g transform="translate(556,224)"><polyline points="2.4,6.4 21.5,15.5" fill="none" stroke="#ffffff" stroke-width="1.1" /><polyline points="19.6,4.4 4.6,19.6" fill="none" stroke="#ffffff" stroke-width="1.1" /><rect x="0.80" y="4.80" width="3.2" height="3.2" fill="#00d000"/><rect x="18.00" y="2.80" width="3.2" height="3.2" fill="#00d000"/><rect x="19.90" y="13.90" width="3.2" height="3.2" fill="#00d000"/><rect x="3.00" y="18.00" width="3.2" height="3.2" fill="#00d000"/><rect x="10.70" y="9.90" width="3.2" height="3.2" fill="#00d000"/></g>
<g transform="translate(556,272)"><text x="1.4" y="8.7" font-family="Liberation Sans,sans-serif" font-size="10.3" fill="#ff00ff" stroke="#ff00ff" stroke-width="0.25" textLength="20.6" lengthAdjust="spacingAndGlyphs">2.54</text><polyline points="2.4,13.3 21.5,13.3" fill="none" stroke="#ff00ff" stroke-width="1.1" /><polyline points="2.4,11 2.4,15.6" fill="none" stroke="#ff00ff" stroke-width="1.1" /><polyline points="21.5,11 21.5,15.6" fill="none" stroke="#ff00ff" stroke-width="1.1" /><polyline points="2.4,18.5 21.5,18.5" fill="none" stroke="#ffffff" stroke-width="1.1" /><rect x="0.80" y="16.90" width="3.2" height="3.2" fill="#00d000"/><rect x="19.90" y="16.90" width="3.2" height="3.2" fill="#00d000"/></g>
<g transform="translate(588,272)"><polyline points="5.6,2.4 2.5,21.4 21.5,18.5" fill="none" stroke="#ffffff" stroke-width="1.1" /><path d="M4.6,11.6 Q12,11 13,19.4" fill="none" stroke="#ff00ff" stroke-width="1.1"/><text x="7.4" y="9.7" font-family="Liberation Sans,sans-serif" font-size="9.4" fill="#ff00ff" stroke="#ff00ff" stroke-width="0.25" textLength="15.6" lengthAdjust="spacingAndGlyphs">74°</text><rect x="4.00" y="0.80" width="3.2" height="3.2" fill="#00d000"/><rect x="0.90" y="19.80" width="3.2" height="3.2" fill="#00d000"/><rect x="19.90" y="16.90" width="3.2" height="3.2" fill="#00d000"/></g>
<g transform="translate(556,304)"><text x="8.6" y="12.9" font-family="Liberation Sans,sans-serif" font-size="10.4" fill="#ff00ff" stroke="#ff00ff" stroke-width="0.25" >H</text><polyline points="2.4,16.4 21.5,16.4" fill="none" stroke="#ffffff" stroke-width="1.1" /><rect x="0.80" y="14.80" width="3.2" height="3.2" fill="#00d000"/><rect x="19.90" y="14.80" width="3.2" height="3.2" fill="#00d000"/></g>
<g transform="translate(588,304)"><polyline points="7.5,2.5 7.5,21.5" fill="none" stroke="#ffffff" stroke-width="1.1" /><text x="11" y="15.6" font-family="Liberation Sans,sans-serif" font-size="10" fill="#ff00ff" stroke="#ff00ff" stroke-width="0.1" >V</text><rect x="5.90" y="0.90" width="3.2" height="3.2" fill="#00d000"/><rect x="5.90" y="19.90" width="3.2" height="3.2" fill="#00d000"/></g>
<g transform="translate(556,336)"><polyline points="2.4,10.5 21.5,7.5" fill="none" stroke="#ffffff" stroke-width="1.1" /><polyline points="2.4,17.5 21.5,14.5" fill="none" stroke="#ffffff" stroke-width="1.1" /><rect x="0.80" y="8.90" width="3.2" height="3.2" fill="#00d000"/><rect x="19.90" y="5.90" width="3.2" height="3.2" fill="#00d000"/><rect x="0.80" y="15.90" width="3.2" height="3.2" fill="#00d000"/><rect x="19.90" y="12.90" width="3.2" height="3.2" fill="#00d000"/></g>
<g transform="translate(588,336)"><polyline points="2.5,6.5 2.5,21.4 21.5,21.4" fill="none" stroke="#ffffff" stroke-width="1.1" /><polyline points="13.5,5.3 13.5,16.3" fill="none" stroke="#ff00ff" stroke-width="1.1" /><polyline points="7,16.3 20,16.3" fill="none" stroke="#ff00ff" stroke-width="1.1" /><rect x="0.90" y="4.90" width="3.2" height="3.2" fill="#00d000"/><rect x="0.90" y="19.80" width="3.2" height="3.2" fill="#00d000"/><rect x="19.90" y="19.80" width="3.2" height="3.2" fill="#00d000"/></g>
<g transform="translate(556,368)"><polyline points="2.4,10.5 21.5,2.5" fill="none" stroke="#ffffff" stroke-width="1.1" /><polyline points="11.4,7.6 18.4,21.5" fill="none" stroke="#ffffff" stroke-width="1.1" /><rect x="0.80" y="8.90" width="3.2" height="3.2" fill="#00d000"/><rect x="19.90" y="0.90" width="3.2" height="3.2" fill="#00d000"/><rect x="16.80" y="19.90" width="3.2" height="3.2" fill="#00d000"/><rect x="9.70" y="5.90" width="3.4" height="3.4" fill="#00d000"/><rect x="8.3" y="4.4" width="6.4" height="6.4" fill="none" stroke="#ff00ff" stroke-width="1.1"/></g>
<g transform="translate(588,368)"><polyline points="2,12.3 9.7,12.3" fill="none" stroke="#ff00ff" stroke-width="1.1" /><polyline points="6,8.8 9.7,12.3 6,15.8" fill="none" stroke="#ff00ff" stroke-width="1.1" /><polyline points="22,12.3 14.1,12.3" fill="none" stroke="#ff00ff" stroke-width="1.1" /><polyline points="17.8,8.8 14.1,12.3 17.8,15.8" fill="none" stroke="#ff00ff" stroke-width="1.1" /></g>
<g transform="translate(556,400)"><polyline points="10.4,3.6 2.6,21.5 21.5,19.4 10.4,3.6" fill="none" stroke="#ffffff" stroke-width="1.1" /><polyline points="3.6,11.2 9,13.4" fill="none" stroke="#ff00ff" stroke-width="1" /><polyline points="15,12.2 19.6,9" fill="none" stroke="#ff00ff" stroke-width="1" /><polyline points="11.6,17.2 12.4,22.6" fill="none" stroke="#ff00ff" stroke-width="1" /><rect x="8.80" y="2.00" width="3.2" height="3.2" fill="#00d000"/><rect x="1.00" y="19.90" width="3.2" height="3.2" fill="#00d000"/><rect x="19.90" y="17.80" width="3.2" height="3.2" fill="#00d000"/></g>
<g transform="translate(588,400)"><polyline points="3.4,22.6 9.4,2.2" fill="none" stroke="#0a8a94" stroke-width="1.2" /><polyline points="4.6,7.6 9.4,2.2 11.4,8.4" fill="none" stroke="#0a8a94" stroke-width="1.2" /><polyline points="13.5,21.7 19.6,1.3" fill="none" stroke="#0a8a94" stroke-width="1.2" /><polyline points="14.8,6.8 19.6,1.3 21.6,7.6" fill="none" stroke="#0a8a94" stroke-width="1.2" /></g>
<g transform="translate(556,432)"><polyline points="1.2,7.3 22.9,18.6" fill="none" stroke="#ffffff" stroke-width="1.1" /><polyline points="8.4,1 15.5,22.7" fill="none" stroke="#ffffff" stroke-width="1.1" /><path d="M4.2,8.8 Q4.6,4.6 8.8,4.2" fill="none" stroke="#ff00ff" stroke-width="1.1"/><path d="M10.2,7.3 Q17.4,6 18,15.6" fill="none" stroke="#ff00ff" stroke-width="1.1"/></g>
<g transform="translate(588,432)"><text x="0.6" y="17" font-family="Liberation Sans,sans-serif" font-size="12.4" fill="#ff00ff" stroke="#ff00ff" stroke-width="0" textLength="22.6" lengthAdjust="spacingAndGlyphs">REF</text></g>
<g transform="translate(556,480)"><rect x="2.4" y="7.6" width="13.7" height="14" fill="none" stroke="#757575" stroke-width="1"/><polyline points="16.1,21.6 21.5,16.2" fill="none" stroke="#757575" stroke-width="1" /><polyline points="2.4,21.6 7.5,16.4" fill="none" stroke="#757575" stroke-width="0.8" /><polyline points="7.5,6 7.5,16.4 17.5,16.4" fill="none" stroke="#ffffff" stroke-width="1.2" stroke-dasharray="2 1.6"/><polyline points="2.4,7.6 7.5,2.3 21.5,2.3 16.1,7.6" fill="none" stroke="#ffffff" stroke-width="1.1" /><polyline points="21.5,2.3 21.5,16.2" fill="none" stroke="#ffffff" stroke-width="1.1" /><polyline points="2.4,7.6 16.1,7.6" fill="none" stroke="#757575" stroke-width="1" /></g>
<g transform="translate(588,480)"><ellipse cx="12" cy="6.6" rx="9" ry="4.2" fill="none" stroke="#757575" stroke-width="1"/><path d="M3,6.6 V18 A9,4.2 0 0 0 21,18 V6.6" fill="none" stroke="#757575" stroke-width="1"/><polyline points="4,18.6 20,17.4" fill="none" stroke="#757575" stroke-width="0.8" stroke-dasharray="2 1.5"/><polyline points="12.5,6 12.5,19" fill="none" stroke="#ffffff" stroke-width="1.1" stroke-dasharray="2 1.6"/><polyline points="12.5,5.6 16.6,7.6 16.6,21.4 12.5,19.4" fill="none" stroke="#ffffff" stroke-width="1.1" /><polyline points="13,6 13,9" fill="none" stroke="#ffffff" stroke-width="1.4" /></g>
<g transform="translate(556,512)"><polyline points="10.2,2.3 21.1,5.9 21.1,8.6 8.9,14.1 16.1,17" fill="none" stroke="#757575" stroke-width="1" stroke-linejoin="round"/><polyline points="10.2,2.3 10.2,5.9 17,8.2 2.6,12.2 2.6,14.5 15.4,18.6" fill="none" stroke="#757575" stroke-width="1" stroke-linejoin="round"/><circle cx="18.4" cy="18.5" r="2.3" fill="#1e1e1e" stroke="#fff" stroke-width="1.2"/></g>
<g transform="translate(588,512)"><path d="M3,7 A9,4 0 0 1 21,7 V17.6 L16.4,20.4 M3,7 V17.6 L11.6,18" fill="none" stroke="#757575" stroke-width="1"/><polyline points="3,7.4 12,7.4" fill="none" stroke="#757575" stroke-width="1" /><polyline points="4,16.8 18,15.6" fill="none" stroke="#757575" stroke-width="0.8" stroke-dasharray="2 1.5"/><polyline points="11.8,6.6 16.4,8.6 16.4,21.4 11.8,19.2 11.8,6.6" fill="none" stroke="#ffffff" stroke-width="1.1" /><polyline points="13.2,8 13.2,19.2" fill="none" stroke="#ffffff" stroke-width="0.8" /></g>
<g transform="translate(556,544)"><rect x="2.10" y="4.05" width="7.7" height="3.6" fill="none" stroke="#fff" stroke-width="1.2" transform="rotate(-45 5.95 5.85)"/><rect x="14.05" y="4.05" width="7.7" height="3.6" fill="none" stroke="#fff" stroke-width="1.2" transform="rotate(45 17.9 5.85)"/><rect x="2.10" y="16.10" width="7.7" height="3.6" fill="none" stroke="#fff" stroke-width="1.2" transform="rotate(45 5.95 17.9)"/><rect x="14.05" y="16.10" width="7.7" height="3.6" fill="none" stroke="#fff" stroke-width="1.2" transform="rotate(-45 17.9 17.9)"/></g>
<g transform="translate(588,544)"><rect x="16.5" y="1.5" width="6" height="3" fill="none" stroke="#fff" stroke-width="1"/><rect x="11.5" y="7.5" width="6" height="3" fill="none" stroke="#fff" stroke-width="1"/><rect x="6.5" y="13.5" width="6" height="3" fill="none" stroke="#fff" stroke-width="1"/><rect x="1.5" y="19.5" width="6" height="3" fill="none" stroke="#fff" stroke-width="1"/></g>
<g transform="translate(556,576)"><rect x="3.4" y="3.6" width="17.2" height="17.2" fill="none" stroke="#757575" stroke-width="1"/><polyline points="6.4,6.6 17.6,17.6" fill="none" stroke="#ffffff" stroke-width="1.1" /><rect x="4.80" y="5.00" width="3.2" height="3.2" fill="#00d000"/><rect x="16.00" y="16.00" width="3.2" height="3.2" fill="#00d000"/></g>
<g transform="translate(588,576)"><polyline points="1,16.5 9,9.4 22.5,9.4 15.8,16.5 1,16.5" fill="none" stroke="#757575" stroke-width="0.9" /><polyline points="11.5,2.6 11.5,21.4" fill="none" stroke="#ffffff" stroke-width="1.3" /><rect x="9.90" y="1.00" width="3.2" height="3.2" fill="#00d000"/><rect x="9.90" y="19.80" width="3.2" height="3.2" fill="#00d000"/></g>
<g transform="translate(556,608)"><path d="M2.4,2.4 H21.6 V10.4 H17 V6.6 H7 V10.4 H2.4 Z" fill="#3a0000" stroke="#fff" stroke-width="1.1"/><path d="M7.4,13.6 H16.6 V17.4 H21.6 V21.6 H2.4 V17.4 H7.4 Z" fill="#000040" stroke="#fff" stroke-width="1.1"/></g>
<g transform="translate(556,656)"><path d="M8.6,2.4 L15.6,6 L15.6,10.4 L23,14 L23,19.4 L15.4,23 L1.8,16.4 L1.8,6 Z" fill="none" stroke="#fff" stroke-width="1.1"/><polyline points="1.8,6 8.8,9.6 15.6,6" fill="none" stroke="#ffffff" stroke-width="1" /><polyline points="8.8,9.6 8.8,14 15.4,17.4 23,14" fill="none" stroke="#ffffff" stroke-width="1" /><polyline points="15.4,17.4 15.4,23" fill="none" stroke="#ffffff" stroke-width="1" /><polyline points="8.8,14 15.6,10.4" fill="none" stroke="#ffffff" stroke-width="1" /></g>
<g transform="translate(588,656)"><path d="M3.6,3.4 H12.6 V14.4 H20.6 V21.6 H3.6 Z" fill="none" stroke="#fff" stroke-width="1.2"/></g>
</svg>
</div>
</div>
<div id="gwr"></div><div id="gwb"></div>
</div>
</body>
</html>
